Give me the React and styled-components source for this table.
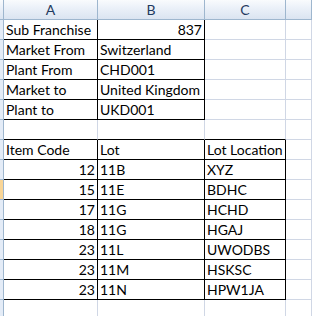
import React from 'react';
import styled, { createGlobalStyle } from 'styled-components';

const GlobalStyle = createGlobalStyle`
  html, body {
    margin: 0;
    padding: 0;
    background: #fff;
    overflow: hidden;
  }
  * {
    box-sizing: border-box;
  }
`;

const GRID = '#d0d7e5';
const EDGE = '#9eb6ce';

const Sheet = styled.div`
  display: grid;
  grid-template-columns: 4px 94px 107px 81px 1fr;
  grid-auto-rows: 20px;
  width: 312px;
  font-family: Lato, 'Liberation Sans', Arial, sans-serif;
  font-size: 14px;
  color: #000;
`;

const ColHead = styled.div`
  background: linear-gradient(#f9fbfd 0%, #eaf0f8 45%, #dbe4f1 100%);
  border-right: 1px solid ${EDGE};
  border-bottom: 1px solid ${EDGE};
  color: #1f3a60;
  text-align: center;
  line-height: 18px;
  padding-top: 1px;
`;

const RowHead = styled.div`
  background: ${(p) => (p.$active ? '#f9d596' : '#e4ecf7')};
  border-right: 1px solid ${EDGE};
  border-bottom: 1px solid ${EDGE};
`;

const Cell = styled.div`
  border-right: 1px solid ${(p) => (p.$r ? '#000' : GRID)};
  border-bottom: 1px solid ${(p) => (p.$b ? '#000' : GRID)};
  padding: 1px 2px 0 2px;
  line-height: 18px;
  white-space: nowrap;
  overflow: hidden;
  text-align: ${(p) => (p.$num ? 'right' : 'left')};
`;

// each row: values for A, B, C and which of those three carry black borders
const rows = [
  { cells: ['Sub Franchise', 837, ''], box: 2 },
  { cells: ['Market From', 'Switzerland', ''], box: 2 },
  { cells: ['Plant From', 'CHD001', ''], box: 2 },
  { cells: ['Market to', 'United Kingdom', ''], box: 2 },
  { cells: ['Plant to', 'UKD001', ''], box: 2 },
  { cells: ['', '', ''], box: 0, under: 3 },
  { cells: ['Item Code', 'Lot', 'Lot Location'], box: 3 },
  { cells: [12, '11B', 'XYZ'], box: 3 },
  { cells: [15, '11E', 'BDHC'], box: 3, active: true },
  { cells: [17, '11G', 'HCHD'], box: 3 },
  { cells: [18, '11G', 'HGAJ'], box: 3 },
  { cells: [23, '11L', 'UWODBS'], box: 3 },
  { cells: [23, '11M', 'HSKSC'], box: 3 },
  { cells: [23, '11N', 'HPW1JA'], box: 3 },
  { cells: ['', '', ''], box: 0 },
];

export default function App() {
  return (
    <>
      <GlobalStyle />
      <Sheet>
        <ColHead />
        <ColHead>A</ColHead>
        <ColHead>B</ColHead>
        <ColHead>C</ColHead>
        <ColHead />
        {rows.map((row, i) => (
          <React.Fragment key={i}>
            <RowHead $active={row.active} />
            {row.cells.map((v, j) => (
              <Cell
                key={j}
                $num={typeof v === 'number'}
                $r={j < row.box}
                $b={j < row.box || j < (row.under || 0)}
              >
                {v}
              </Cell>
            ))}
            <Cell />
          </React.Fragment>
        ))}
      </Sheet>
    </>
  );
}
